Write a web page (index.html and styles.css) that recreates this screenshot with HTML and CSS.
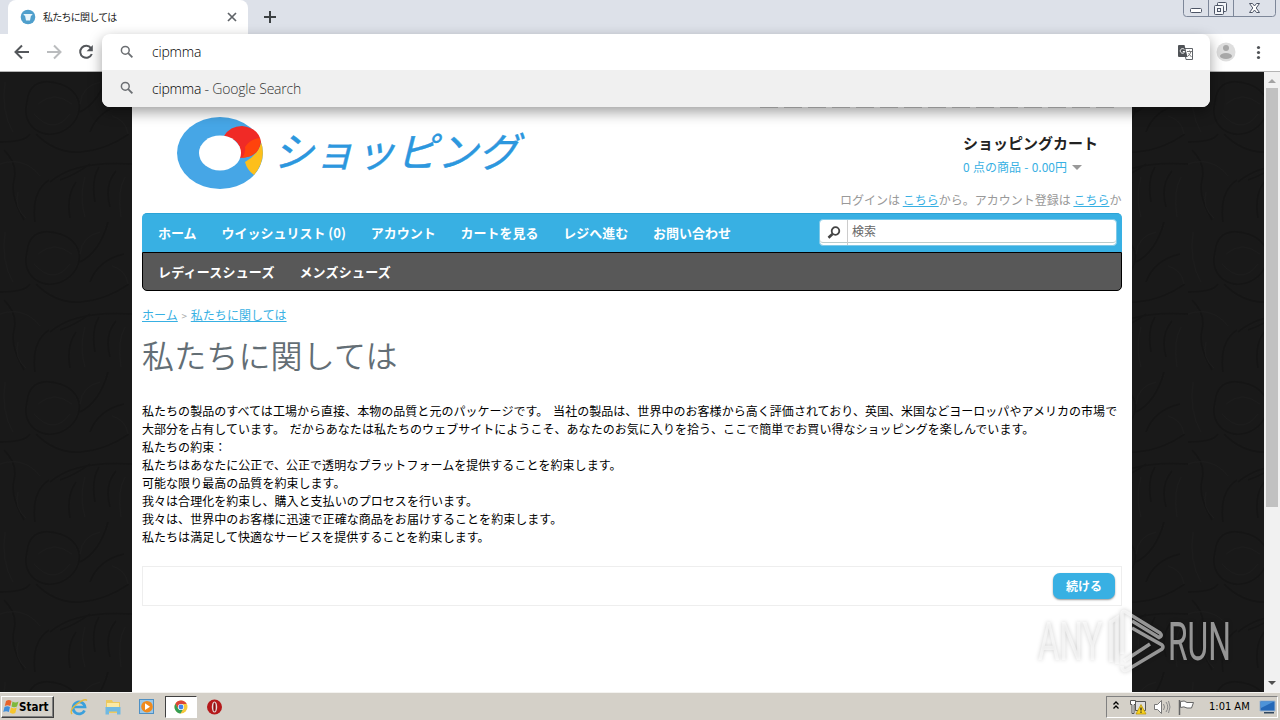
FILE: index.html
```html
<!DOCTYPE html>
<html lang="ja">

<head>
    <title>私たちに関しては</title>
    <meta charset="utf-8">
    <link rel="stylesheet" href="styles.css">
</head>

<body>
    <div class="screen">
        <div class="tabstrip">
            <div class="tab">
                <svg class="favicon" width="16" height="16" viewBox="0 0 16 16">
                    <circle cx="8" cy="8" r="7.300" fill="#4f9fcc" />
                    <path d="M3.500 5h9l-.5 1.500h-1L10 11.500H6L5 6.500H4z" fill="#e8f5fb" />
                </svg>
                <span class="tab-title">私たちに関しては</span>
                <svg width="10" height="10" viewBox="0 0 10 10" stroke="#5f6368" stroke-width="1.700">
                    <path d="M1 1l8 8M9 1l-8 8" />
                </svg>
            </div>
            <svg class="plus" width="12" height="12" viewBox="0 0 12 12" stroke="#3c4043" stroke-width="2">
                <path d="M6 0v12M0 6h12" />
            </svg>
            <svg class="winbtns" width="94" height="18" viewBox="0 0 94 18" fill="none" stroke="#7d8799">
                <path d="M.5 0v13.500q0 3 3 3h86q3 0 3-3V0M25.500 0v16.500M50.500 0v16.500" />
                <rect x="7.500" y="8.500" width="11" height="4" rx="1" stroke="#4d5566" fill="#fff" />
                <g stroke="#4d5566" fill="#f4f6f9">
                    <rect x="34.500" y="2.500" width="9" height="9" rx="1" />
                    <rect x="31.500" y="5.500" width="9" height="9" rx="1" />
                    <rect x="34.500" y="8.500" width="3" height="3" />
                </g>
                <path d="M66.500 3.500h3l2 2.500 2-2.500h3l-3.300 4.500 3.300 4.500h-3l-2-2.500-2 2.500h-3l3.300-4.500z" fill="#fff" stroke="#4d5566" />
            </svg>
        </div>

        <div class="toolbar">
            <svg width="102" height="37" viewBox="0 0 102 37" fill="none" stroke-width="2">
                <path d="M29 18H16M22 11.500L15.500 18l6.500 6.500" stroke="#54575b" />
                <path d="M47 18h13M54 11.500l6.500 6.500-6.500 6.500" stroke="#babcbe" />
                <path d="M91 14.200A6 6 0 1 0 91.800 20" stroke="#54575b" />
                <path d="M92.800 11v6.200h-6.200z" fill="#54575b" />
            </svg>
            <svg class="menu" width="56" height="37" viewBox="0 0 56 37">
                <circle cx="12" cy="18" r="9.500" fill="#dedede" />
                <circle cx="12" cy="14" r="3" fill="#a8a8a8" />
                <ellipse cx="12" cy="22" rx="6" ry="3" fill="#a8a8a8" />
                <g fill="#505357">
                    <circle cx="44.500" cy="13.500" r="1.600" />
                    <circle cx="44.500" cy="18.500" r="1.600" />
                    <circle cx="44.500" cy="23.500" r="1.600" />
                </g>
            </svg>
        </div>

        <div class="omnibox">
            <div class="omni-row">
                <svg class="lens" width="14" height="14" viewBox="0 0 14 14" fill="none" stroke="#6b6e72" stroke-width="1.500">
                    <circle cx="5.300" cy="5.300" r="3.900" />
                    <path d="M8.200 8.200l4.200 4.200" stroke-width="1.800" />
                </svg>
                <span class="typed">cipmma</span>
                <svg class="translate" width="15" height="15" viewBox="0 0 15 15">
                    <path d="M6 3.500h8.500v11H8z" fill="#fff" stroke="#5f6368" />
                    <path d="M9 6.500h5M11.500 5.500v1M13 6.500q-1 3.500-3.500 5M10.500 8.500l3 3.500" fill="none" stroke="#777" />
                    <path d="M1 0h5.500l3 12H1q-1 0-1-1V1q0-1 1-1z" fill="#505357" />
                    <path d="M6.400 4.500A2.300 2.300 0 1 0 6.800 6.500H4.800" fill="none" stroke="#fff" />
                </svg>
            </div>
            <div class="omni-row suggestion">
                <svg class="lens" width="14" height="14" viewBox="0 0 14 14" fill="none" stroke="#6b6e72" stroke-width="1.500">
                    <circle cx="5.300" cy="5.300" r="3.900" />
                    <path d="M8.200 8.200l4.200 4.200" stroke-width="1.800" />
                </svg>
                <span class="typed">cipmma <span class="hint">- Google Search</span></span>
            </div>
        </div>

        <div class="viewport">
            <svg class="pattern" width="1264" height="620">
                <defs>
                    <pattern id="damask" width="132" height="150" patternUnits="userSpaceOnUse">
                        <g fill="none" stroke="#151515" stroke-width="2">
                            <path d="M27 30C20 55 45 70 65 58S85 20 60 12 28 18 27 30M0 70q25 0 30-8M36 62q20 20 45 18t48-18M50 110q25-22 82-18M60 108q15-5 30-16M4 78q14 14 10 30t10 40M80 40q20-10 28-40M90 60q8-22 34-28M95 130q-4-22 4-35M110 135q-6-22 6-36M70 146q-4-22 6-36M35 150q-4-30 14-42" />
                        </g>
                        <g fill="none" stroke="#1c1c1c">
                            <path d="M38 32q16-14 34 0M34 42q20 22 36 0M100 10q-18 4-20 22M0 92q24-8 40 12M18 120q-4 16 8 26M85 105q-6 20 0 40M125 105q-8 14-4 40M5 10q-4 30 8 50M112 44q14 4 16 18" />
                        </g>
                    </pattern>
                </defs>
                <rect width="1264" height="620" fill="url(#damask)" />
            </svg>
            <div class="page">
                <div class="header">
                    <svg class="logo" width="90" height="74" viewBox="0 0 90 74">
                        <ellipse cx="44" cy="37" rx="43" ry="36" fill="#46a6e6" />
                        <path d="M69 46Q83 38 85 26Q91 43 78 59Q71 54 69 46z" fill="#fdbf1b" />
                        <path d="M48 20Q54 10 66 10Q83 12 85 26Q82 42 63 42Q68 24 48 20z" fill="#f02a26" />
                        <path d="M69 31Q74 23 84 22Q86 40 66 42Q70 37 69 31z" fill="#ff430c" />
                        <ellipse cx="44" cy="37" rx="21" ry="17.500" fill="#fff" />
                    </svg>
                    <div class="brand">ショッピング</div>
                    <div class="account">
                        <div class="cart">
                            <div class="cart-title">ショッピングカート</div>
                            <div class="cart-total">0 点の商品 - 0.00円 <span class="caret"></span></div>
                        </div>
                        <div class="welcome">ログインは <a>こちら</a>から。アカウント登録は <a>こちら</a>か</div>
                    </div>
                </div>
                <div class="nav">
                    <span>ホーム</span>
                    <span>ウイッシュリスト (0)</span>
                    <span>アカウント</span>
                    <span>カートを見る</span>
                    <span>レジへ進む</span>
                    <span>お問い合わせ</span>
                    <div class="search">
                        <div class="search-btn">
                            <svg width="14" height="14" viewBox="0 0 14 14" fill="none" stroke="#444">
                                <circle cx="8.500" cy="5" r="3.800" stroke-width="1.800" />
                                <path d="M5.500 8L1.500 11.800" stroke-width="2.600" />
                            </svg>
                        </div>
                        <span class="search-text">検索</span>
                    </div>
                </div>
                <div class="nav categories">
                    <span>レディースシューズ</span>
                    <span>メンズシューズ</span>
                </div>
                <div class="breadcrumb"><a>ホーム</a> <i>&gt;</i> <a>私たちに関しては</a></div>
                <h1>私たちに関しては</h1>
                <p class="content">
                    私たちの製品のすべては工場から直接、本物の品質と元のパッケージです。 当社の製品は、世界中のお客様から高く評価されており、英国、米国などヨーロッパやアメリカの市場で<br>
                    大部分を占有しています。 だからあなたは私たちのウェブサイトにようこそ、あなたのお気に入りを拾う、ここで簡単でお買い得なショッピングを楽しんでいます。<br>
                    私たちの約束：<br>
                    私たちはあなたに公正で、公正で透明なプラットフォームを提供することを約束します。<br>
                    可能な限り最高の品質を約束します。<br>
                    我々は合理化を約束し、購入と支払いのプロセスを行います。<br>
                    我々は、世界中のお客様に迅速で正確な商品をお届けすることを約束します。<br>
                    私たちは満足して快適なサービスを提供することを約束します。
                </p>
                <div class="buttons"><span class="button">続ける</span></div>
            </div>
            <div class="scrollbar">
                <span class="arrow up"></span>
                <span class="thumb"></span>
                <span class="arrow down"></span>
            </div>
        </div>

        <svg class="watermark" width="240" height="80" viewBox="0 0 240 80">
            <g class="wm-text">
                <text transform="translate(8 56) scale(.62 1)">ANY</text>
                <text transform="translate(138 56) scale(.6 1)">RUN</text>
            </g>
            <path class="wm-mark" d="M81 58V18l6-4V60M92 50V10q0-4 4-2l34 21q3 3-1 4.500L102 17M102 24l30 17q2 2 0 4L97 66q-5 2-5-4M120 40L94 57" />
        </svg>

        <div class="taskbar">
            <div class="start">
                <svg width="17" height="16" viewBox="0 0 17 16">
                    <path d="M3 2q3-2 5.500 0L7.300 7Q4.500 5.500 1.800 7z" fill="#e8632a" />
                    <path d="M9.500 2.500q3 1.800 6 0L14 7.500q-3 1.500-5.500 0z" fill="#7fb83c" />
                    <path d="M1.500 8q3-1.500 5.500 0L5.800 13Q3 11.500.3 13z" fill="#3f8edb" />
                    <path d="M8 8.600q3 1.600 5.700 0L12.300 14q-3 1.500-5.500-.4z" fill="#f6c52c" />
                </svg>
                <span>Start</span>
            </div>
            <div class="quick">
                <svg width="18" height="18" viewBox="0 0 18 18" fill="none">
                    <path d="M14.500 12.500A6 6 0 1 1 15 9H4" stroke="#3ba0dc" stroke-width="2.700" />
                    <path d="M2 16Q-1 12 7 6T17 2.500" stroke="#e5b93c" stroke-width="1.400" />
                </svg>
            </div>
            <div class="quick">
                <svg width="18" height="18" viewBox="0 0 18 18">
                    <path d="M2 2h6l1 2h7v11H2z" fill="#ecc95f" />
                    <path d="M3 5h12v6H3z" fill="#fbe9a4" />
                    <path d="M1.500 9h15v7.500H13v-3H5v3H1.500z" fill="#70b9e2" />
                </svg>
            </div>
            <div class="quick">
                <svg width="18" height="18" viewBox="0 0 18 18">
                    <rect x="1.500" y="1.500" width="14" height="14" fill="#9ac7e8" stroke="#4e90c4" />
                    <circle cx="9" cy="8.700" r="5.800" fill="#f08a1d" />
                    <path d="M7 5.300l5 3.400-5 3.400z" fill="#fff" />
                </svg>
            </div>
            <div class="quick active">
                <svg width="14" height="14" viewBox="0 0 14 14">
                    <circle cx="7" cy="7" r="6.500" fill="#f6c83b" />
                    <path d="M1.400 3.700A6.500 6.500 0 0 1 12.700 4H7L4 8.500z" fill="#dc4538" />
                    <path d="M1.400 3.700A6.500 6.500 0 0 0 6.500 13.500L9.500 8.500 4 8.500z" fill="#339d55" />
                    <circle cx="7" cy="7" r="3.100" fill="#fff" />
                    <circle cx="7" cy="7" r="2.400" fill="#4284ec" />
                </svg>
            </div>
            <div class="quick">
                <svg width="18" height="18" viewBox="0 0 18 18">
                    <circle cx="8.500" cy="9" r="7.500" fill="#b5191b" />
                    <ellipse cx="8.500" cy="9" rx="2.700" ry="5.500" fill="#e8dcdc" />
                    <ellipse cx="8.500" cy="9" rx="1.200" ry="4.500" fill="#8e0e10" />
                </svg>
            </div>
            <div class="tray">
                <svg width="96" height="20" viewBox="0 0 96 20" fill="none">
                    <path d="M5.500 7.500L8 5l2.500 2.500M5.500 11.500L8 9l2.500 2.500" stroke="#000" stroke-width="1.300" />
                    <g stroke="#555" fill="#fff">
                        <path d="M27.500 4.500h10v9h-10z" fill="#ddd" />
                        <path d="M22.500 3.500h5v4h-1.500v9h-2v-9h-1.500z" />
                    </g>
                    <path d="M33 7.500l5 9.500H28z" fill="#f8d21d" stroke="#b89000" stroke-width=".7" />
                    <path d="M33 10.500v3M33 14.500v1.300" stroke="#222" stroke-width="1.300" />
                    <path d="M46.500 7.500h3l4-4v13l-4-4h-3z" fill="#fff" stroke="#777" />
                    <path d="M55.500 7q2 3 0 6M58 5q3.500 5 0 10M60.500 4q3 6 0 12" stroke="#888" />
                    <path d="M71.500 3v15" stroke="#666" stroke-width="1.500" />
                    <path d="M72.500 4.500q4-1.500 6.500 1h6.500l-2 5.500H79q-3-2-6.500-.5z" fill="#fff" stroke="#666" />
                </svg>
                <span class="clock">1:01 AM</span>
                <svg width="18" height="16" viewBox="0 0 18 16">
                    <path d="M1 2h15v10H1z" fill="#2468b8" stroke="#9cb4cf" />
                    <path d="M1.500 2.500H15L2 9z" fill="#4d93d8" />
                    <path d="M5 13h10v1.500H5z" fill="#30475f" />
                </svg>
            </div>
        </div>
    </div>
</body>

</html>
```
FILE: styles.css
```css
* {
    box-sizing: border-box;
}

body {
    margin: 0;
    font: 12px/18px "Noto Sans CJK JP", sans-serif;
    color: #000;
}

svg {
    display: block;
    flex: none;
}

.screen {
    position: relative;
    display: flex;
    flex-direction: column;
    width: 1280px;
    height: 720px;
    overflow: hidden;
    white-space: nowrap;
}

/* browser window */
.tabstrip {
    display: flex;
    height: 34px;
    padding-left: 8px;
    background: #dde1e9;
}

.tab {
    display: flex;
    align-items: center;
    width: 240px;
    padding: 0 11px 0 12px;
    background: #fff;
    border-radius: 8px 8px 0 0;
}

.tab-title {
    flex: 1;
    margin-left: 7px;
    font-size: 10px;
    letter-spacing: -0.75px;
    color: #222;
}

.plus {
    margin: 11px 0 0 16px;
}

.winbtns {
    margin: 0 3px 0 auto;
}

.toolbar {
    display: flex;
    justify-content: space-between;
    height: 38px;
    background: #fff;
    border-bottom: 1px solid #b4b4b4;
}

.menu {
    margin-right: 10px;
}

.omnibox {
    position: absolute;
    z-index: 3;
    top: 34px;
    left: 102px;
    width: 1108px;
    height: 73px;
    background: #fff;
    border-radius: 8px;
    box-shadow: 0 5px 14px rgba(0, 0, 0, .38);
    overflow: hidden;
}

.omni-row {
    display: flex;
    align-items: center;
    height: 36px;
    padding: 0 17px 0 18px;
}

.suggestion {
    height: 37px;
    background: #f0f0f0;
}

.lens {
    margin-bottom: 1px;
}

.typed {
    flex: 1;
    margin-left: 18px;
    font: 300 14px/20px "Open Sans", sans-serif;
    letter-spacing: -0.2px;
    color: #000;
}

.hint {
    color: #333;
}

/* page area */
.viewport {
    position: relative;
    display: flex;
    justify-content: flex-end;
    height: 620px;
    background: #191919;
}

.pattern {
    position: absolute;
    top: 0;
    left: 0;
}

.page {
    position: relative;
    width: 1000px;
    margin-right: 132px;
    padding: 0 10px;
    background: #fff repeating-linear-gradient(90deg, #ccc 0 18px, #fff 18px 24px) 628px 35px / 360px 1px no-repeat;
}

.header {
    display: flex;
    height: 141px;
}

.logo {
    margin: 44px 0 0 34px;
}

.brand {
    margin: 47px 0 0 7px;
    font-size: 41px;
    line-height: 60px;
    font-style: italic;
    color: #2c97de;
    -webkit-text-stroke: 0.4px #2c97de;
}

.account {
    width: 282px;
    margin-left: auto;
    padding-top: 60px;
    overflow: hidden;
}

.cart {
    padding-left: 123px;
}

.cart-title {
    font-size: 15px;
    line-height: 22px;
    font-weight: bold;
    color: #222;
}

.cart-total {
    margin-top: 4px;
    word-spacing: 0.6px;
    color: #38b0e3;
}

.caret {
    display: inline-block;
    margin-left: 2px;
    border: 5px solid transparent;
    border-top-color: #999;
    border-bottom: 0;
    vertical-align: 2px;
}

.welcome {
    margin-top: 15px;
    color: #999;
}

a {
    color: #38b0e3;
    text-decoration: underline;
}

.nav {
    display: flex;
    align-items: center;
    gap: 24.8px;
    height: 39px;
    padding: 0 5px 0 16px;
    background: #38b0e3;
    border: 1px solid #2ba3d6;
    border-width: 1px 0 0;
    border-radius: 5px 5px 0 0;
    font-size: 13px;
    font-weight: bold;
    color: #fff;
}

.categories {
    padding-left: 15px;
    background: #585858;
    border: 1px solid #000;
    border-radius: 0 0 5px 5px;
    letter-spacing: 0.2px;
}

.search {
    display: flex;
    align-items: center;
    width: 298px;
    height: 27px;
    margin: 0 0 2px auto;
    background: #fff;
    border: 1px solid #7fc9e8;
    border-radius: 4px;
    box-shadow: inset 0 -2px 0 #fff, inset 0 -3px 0 #bcc;
    font-size: 12px;
    font-weight: normal;
}

.search-btn {
    padding: 6px 6px 5px 7px;
    border-right: 1px solid #ccc;
}

.search-text {
    padding: 0 0 2px 4px;
    color: #666;
}

.breadcrumb {
    margin-top: 15px;
}

.breadcrumb i {
    margin: 0 1px;
    font-style: normal;
    font-size: 10px;
    color: #aaa;
}

.breadcrumb a {
    letter-spacing: 0.05px;
}

h1 {
    margin: 7px 0 26px;
    font-size: 32px;
    line-height: 44px;
    font-weight: 350;
    letter-spacing: 0.15px;
    color: #636e75;
}

.content {
    margin: 0;
    letter-spacing: 0.04px;
    word-spacing: 2px;
}

.buttons {
    display: flex;
    justify-content: flex-end;
    height: 40px;
    margin-top: 20px;
    padding: 6px;
    border: 1px solid #eee;
}

.button {
    height: 26px;
    padding: 0 13px;
    line-height: 25px;
    font-weight: bold;
    color: #fff;
    background: #38b0e3;
    border-radius: 7px;
    box-shadow: 0 1px 2px rgba(0, 0, 0, .4);
}

.scrollbar {
    position: relative;
    display: flex;
    flex-direction: column;
    align-items: center;
    width: 16px;
    background: #f1f1f1;
}

.thumb {
    width: 12px;
    height: 419px;
    margin-top: 5px;
    background: #c1c1c1;
}

.arrow {
    border: 4px solid transparent;
}

.up {
    margin-top: 3px;
    border-bottom-color: #a3a3a3;
}

.down {
    margin: auto 0 3px;
    border-top-color: #505050;
}

/* overlay mark */
.watermark {
    position: absolute;
    top: 604px;
    left: 1030px;
    filter: drop-shadow(0 0 2px rgba(0, 0, 0, .35));
}

.wm-text {
    font: 53px Roboto, sans-serif;
    fill: rgba(255, 255, 255, .55);
}

.wm-mark {
    fill: none;
    stroke: rgba(255, 255, 255, .55);
    stroke-width: 3.5;
}

/* taskbar */
.taskbar {
    display: flex;
    align-items: center;
    height: 28px;
    padding-top: 1px;
    background: #d4d0c8;
    border-top: 1px solid #f4f3f0;
}

.start {
    display: flex;
    align-items: center;
    width: 53px;
    height: 22px;
    margin: 0 9px 0 1px;
    padding-left: 1px;
    border: 1px solid;
    border-color: #fff #404040 #404040 #fff;
    box-shadow: inset -1px -1px 0 #808080;
    font: bold 11.500px/16px "DejaVu Sans Condensed", "DejaVu Sans", sans-serif;
}

.start svg {
    margin-right: -1px;
}

.quick {
    display: flex;
    align-items: center;
    justify-content: center;
    width: 32px;
    height: 22px;
    margin-right: 2px;
}

.active {
    background: #fff;
    border: 1px solid;
    border-color: #404040 #fff #fff #404040;
}

.tray {
    display: flex;
    align-items: center;
    width: 172px;
    height: 22px;
    margin: 0 2px 0 auto;
    padding-left: 1px;
    border: 1px solid;
    border-color: #808080 #fff #fff #808080;
}

.clock {
    width: 48px;
    margin: 0 4px 0 5px;
    font: 11px/16px "DejaVu Sans Condensed", "DejaVu Sans", sans-serif;
}
```
